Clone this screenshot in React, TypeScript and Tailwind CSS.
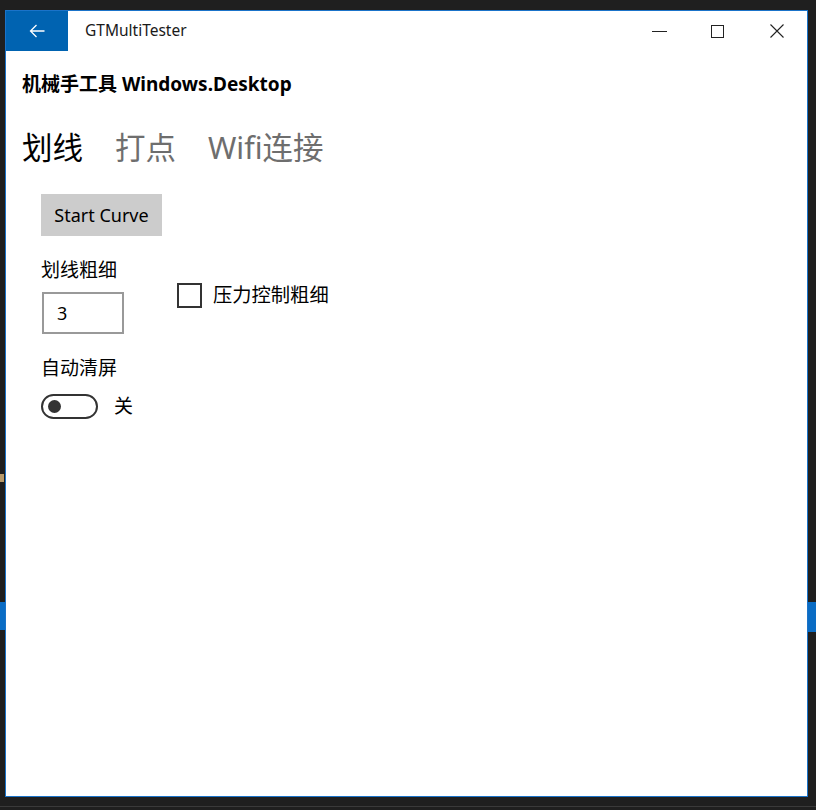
import React from "react";

const latin = '"Noto Sans", "Noto Sans CJK SC", sans-serif';

export default function App() {
  return (
    <div
      className="relative w-[816px] h-[810px] bg-[#1f1f1f] overflow-hidden pl-[5px] pt-[10px]"
      style={{ fontFamily: latin }}
    >
      {/* desktop fragments behind the window */}
      <div className="absolute left-0 top-[602px] w-[6px] h-[28px] bg-[#0a6cc4]" />
      <div className="absolute right-0 top-[602px] w-[9px] h-[30px] bg-[#0a6cc4]" />
      <div className="absolute left-0 top-[474px] w-[4px] h-[8px] bg-[#b89a6a]" />
      <div className="absolute left-0 top-[806px] w-[816px] h-[1px] bg-[#3a3a3a]" />

      <div className="relative w-[803px] h-[787px] border border-[#1a73c9] bg-white flex flex-col">
        {/* title bar */}
        <div className="flex h-[40px] items-stretch">
          <div className="w-[62px] bg-[#0063b1] flex items-center justify-center">
            <svg width="16" height="14" viewBox="0 0 16 14" fill="none" stroke="white" strokeWidth="1.3">
              <path d="M15.5 7H1.5M7.5 1L1.5 7L7.5 13" />
            </svg>
          </div>
          <div className="ml-[17px] flex items-center text-[15.5px] text-[#1a1a1a]">GTMultiTester</div>
          <div className="ml-auto flex items-center">
            <div className="w-[55px] flex justify-center">
              <div className="w-[15px] h-[1px] bg-[#222]" />
            </div>
            <div className="w-[60px] flex justify-center">
              <div className="w-[13px] h-[13px] border border-[#222]" />
            </div>
            <div className="w-[60px] flex justify-center">
              <svg width="14" height="14" viewBox="0 0 14 14" stroke="#222" strokeWidth="1.1">
                <path d="M0.5 0.5L13.5 13.5M13.5 0.5L0.5 13.5" />
              </svg>
            </div>
          </div>
        </div>

        {/* heading */}
        <div className="ml-[16px] mt-[21px] h-[24px] leading-[24px] text-[19px] font-bold text-black">
          机械手工具 Windows.Desktop
        </div>

        {/* pivot headers */}
        <div className="ml-[16px] mt-[31px] h-[40px] leading-[40px] flex gap-[32px] text-[30.5px]">
          <span className="text-black">划线</span>
          <span className="text-[#6e6e6e]">打点</span>
          <span className="text-[#6e6e6e]">Wifi连接</span>
        </div>

        {/* content */}
        <div className="ml-[35px] flex flex-col items-start">
          <button className="mt-[27px] w-[121px] h-[42px] bg-[#cccccc] text-[18px] text-black flex items-center justify-center">
            Start Curve
          </button>

          <div className="flex items-start">
            <div className="flex flex-col">
              <div className="mt-[21px] h-[26px] leading-[26px] text-[19px] text-black">划线粗细</div>
              <div className="mt-[9px] ml-[1px] w-[82px] h-[42px] border-2 border-[#999999] flex items-center pl-[13px] text-[18px] text-black">
                3
              </div>
            </div>
            <div className="ml-[53px] mt-[46px] flex items-center">
              <div className="w-[25px] h-[25px] border-2 border-[#333333]" />
              <span className="ml-[11px] text-[19.3px] leading-[26px] text-black">压力控制粗细</span>
            </div>
          </div>

          <div className="mt-[21px] h-[26px] leading-[26px] text-[19px] text-black">自动清屏</div>
          <div className="mt-[12px] flex items-center">
            <div className="w-[57px] h-[25px] rounded-full border-2 border-[#333333] flex items-center pl-[5px]">
              <div className="w-[13px] h-[13px] rounded-full bg-[#333333]" />
            </div>
            <span className="ml-[16px] text-[19px] leading-[26px] text-black">关</span>
          </div>
        </div>
      </div>
    </div>
  );
}
